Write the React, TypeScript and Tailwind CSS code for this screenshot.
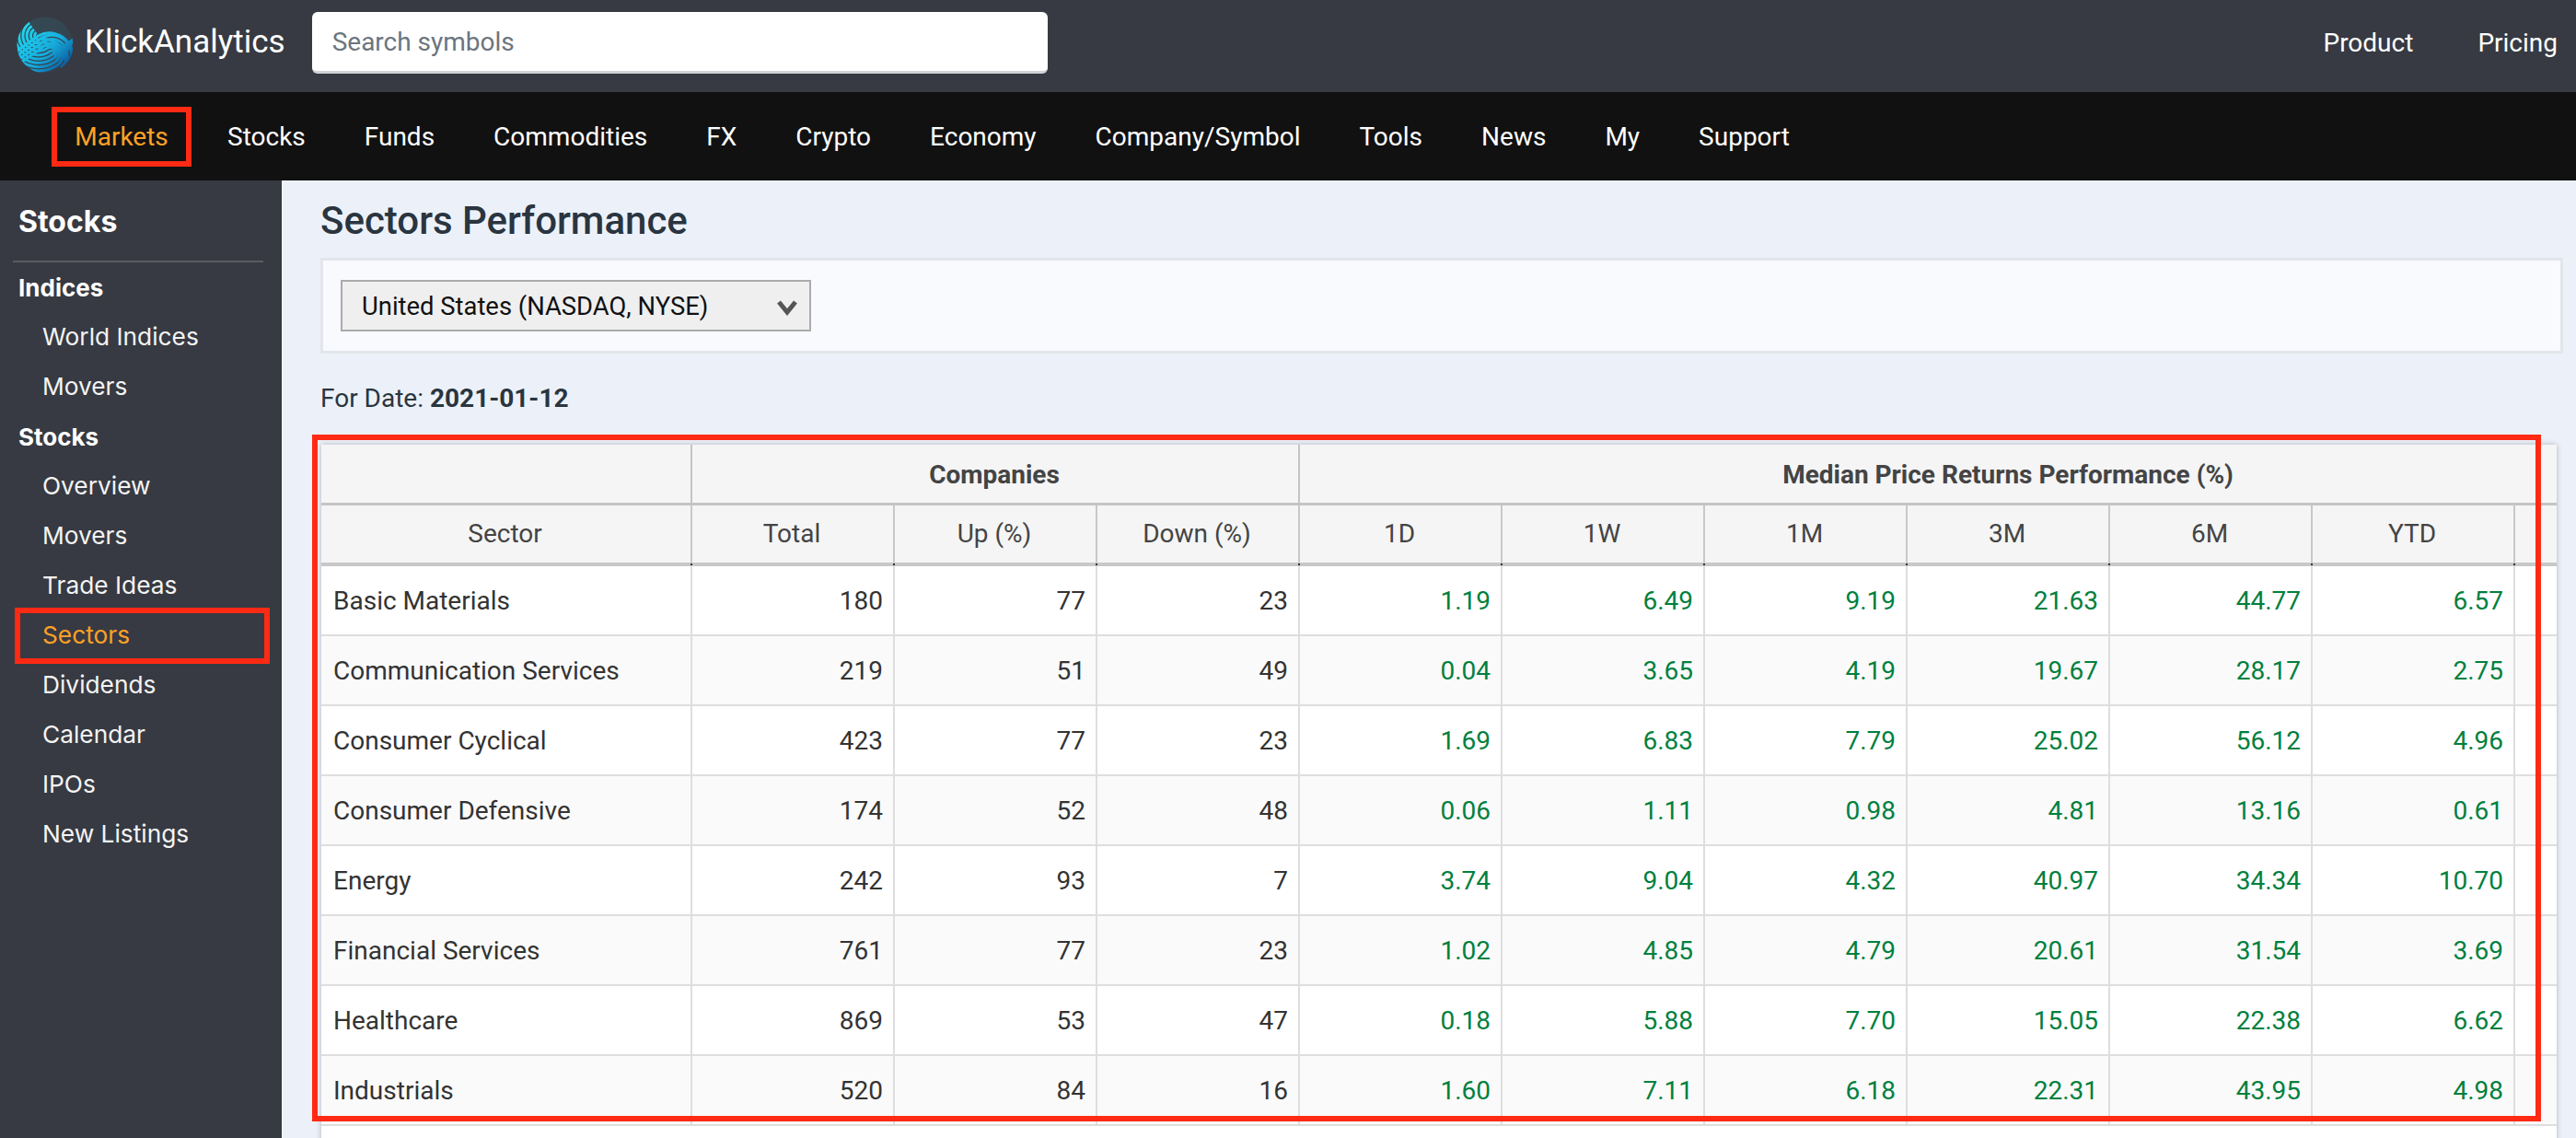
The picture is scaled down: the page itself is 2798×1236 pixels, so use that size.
const navItems = ['Stocks', 'Funds', 'Commodities', 'FX', 'Crypto', 'Economy', 'Company/Symbol', 'Tools', 'News', 'My', 'Support'];

const rows: (string | number)[][] = [
  ['Basic Materials', 180, 77, 23, '1.19', '6.49', '9.19', '21.63', '44.77', '6.57'],
  ['Communication Services', 219, 51, 49, '0.04', '3.65', '4.19', '19.67', '28.17', '2.75'],
  ['Consumer Cyclical', 423, 77, 23, '1.69', '6.83', '7.79', '25.02', '56.12', '4.96'],
  ['Consumer Defensive', 174, 52, 48, '0.06', '1.11', '0.98', '4.81', '13.16', '0.61'],
  ['Energy', 242, 93, 7, '3.74', '9.04', '4.32', '40.97', '34.34', '10.70'],
  ['Financial Services', 761, 77, 23, '1.02', '4.85', '4.79', '20.61', '31.54', '3.69'],
  ['Healthcare', 869, 53, 47, '0.18', '5.88', '7.70', '15.05', '22.38', '6.62'],
  ['Industrials', 520, 84, 16, '1.60', '7.11', '6.18', '22.31', '43.95', '4.98'],
];

const columns = ['Total', 'Up (%)', 'Down (%)', '1D', '1W', '1M', '3M', '6M', 'YTD'];

// Logo: parallel S curves tilted to the left, cut out of a blue gradient disc
function Logo() {
  const R = 13;
  const step = 4.4;
  const paths = [-6, -5, -4, -3, -2, -1, 0, 1, 2, 3, 4, 5, 6].map((k) => {
    const d = k * step;
    const r = R + d;
    const q = R - d;
    if (r <= 0) {
      const y = 19 - r;
      return `M -30 ${y} L 32 ${y} A ${q} ${q} 0 0 1 32 ${45 + q}`;
    }
    if (q <= 0) {
      const y = 45 + q;
      return `M 32 ${19 - r} A ${r} ${r} 0 0 0 32 ${19 + r} L 94 ${y}`;
    }
    return `M 32 ${19 - r} A ${r} ${r} 0 0 0 32 ${19 + r} A ${q} ${q} 0 0 1 32 ${45 + q}`;
  });
  return (
    <svg viewBox="0 0 64 64" className="h-[62px] w-[62px] shrink-0 mt-[6px]">
      <defs>
        <linearGradient id="logo-blue" x1="0.1" y1="0.1" x2="0.9" y2="0.9">
          <stop offset="0" stopColor="#22dcf2" />
          <stop offset="0.6" stopColor="#16aadc" />
          <stop offset="1" stopColor="#0b5296" />
        </linearGradient>
        <mask id="logo-stripes">
          <g fill="none" stroke="#fff" strokeWidth="3.1" transform="rotate(-35 32 32)">
            {paths.map((d) => (
              <path key={d} d={d} />
            ))}
          </g>
        </mask>
      </defs>
      <circle cx="32" cy="32" r="31.5" fill="url(#logo-blue)" opacity="0.1" />
      <circle cx="32" cy="32" r="31.5" fill="url(#logo-blue)" mask="url(#logo-stripes)" />
    </svg>
  );
}

function SideItem({ label, active }: { label: string; active?: boolean }) {
  return (
    <div
      className={`h-[54px] flex items-center pl-[46px] text-[26.3px] ${
        active ? 'text-[#ffa126]' : 'text-[#f4f4f4]'
      }`}
    >
      {label}
    </div>
  );
}

function SideLabel({ label }: { label: string }) {
  return <div className="h-[54px] flex items-center pl-[20px] text-[26px] font-bold text-white">{label}</div>;
}

// tiny dark tick where the header rule meets a column rule
function Tick() {
  return <span className="absolute -bottom-[3px] -right-[2px] h-[2px] w-[2px] bg-[#333]" />;
}

export default function App() {
  return (
    <div className="h-[1236px] w-[2798px] overflow-hidden flex flex-col bg-[#ecf1f9] font-['Roboto',sans-serif]">
      {/* TOP BAR */}
      <header className="h-[100px] shrink-0 bg-[#373a42] flex items-center pl-[18px] pr-[20px] pb-[8px]">
        <Logo />
        <span className="ml-[12px] text-[35px] text-white">KlickAnalytics</span>
        <input
          readOnly
          placeholder="Search symbols"
          className="ml-[29px] h-[67px] w-[799px] rounded-[6px] border-b-[3px] border-[#d0d3d8] bg-white px-[22px] pt-[2px] text-[28px] placeholder:text-[#6c757d] outline-none"
        />
        <div className="ml-auto flex items-center gap-[70px] pt-[2px] text-[28px] text-white">
          <span>Product</span>
          <span>Pricing</span>
        </div>
      </header>

      {/* MARKET NAV */}
      <nav className="h-[96px] shrink-0 bg-[#111111] flex items-center pl-[56px] gap-[64px] text-[28px] text-white">
        <span className="-mr-[25px] h-[65px] w-[152px] flex items-center justify-center border-[6px] border-[#ff2a14] pt-[1px] text-[#ffa126]">
          Markets
        </span>
        {navItems.map((item) => (
          <span key={item} className="pt-[1px]">
            {item}
          </span>
        ))}
      </nav>

      <div className="flex flex-1 min-h-0">
        {/* SIDEBAR */}
        <aside className="w-[306px] shrink-0 bg-[#373a42] font-['Inter',sans-serif]">
          <div className="h-[89px] mx-[14px] w-[272px] border-b-2 border-[#5a5c60] flex items-center pl-[6px] pt-[3px] text-[32px] font-bold text-white">
            Stocks
          </div>
          <SideLabel label="Indices" />
          <SideItem label="World Indices" />
          <SideItem label="Movers" />
          <SideLabel label="Stocks" />
          <SideItem label="Overview" />
          <SideItem label="Movers" />
          <SideItem label="Trade Ideas" />
          <div className="relative">
            <SideItem label="Sectors" active />
            <span className="absolute left-[16px] top-[-3px] h-[61px] w-[277px] border-[6px] border-[#ff2a14]" />
          </div>
          <SideItem label="Dividends" />
          <SideItem label="Calendar" />
          <SideItem label="IPOs" />
          <SideItem label="New Listings" />
        </aside>

        {/* CONTENT */}
        <main className="flex-1 min-w-0 pl-[42px] pr-[14px]">
          <h1 className="h-[84px] flex items-center pt-[3px] text-[42px] font-medium text-[#2a3540]">Sectors Performance</h1>

          <div className="h-[104px] border-[3px] border-[#e2e6eb] bg-[#f8fafe] flex items-center pl-[19px]">
            <div className="relative w-[511px]">
              <select className="h-[56px] w-full appearance-none rounded-none border-2 border-[#ababab] bg-[#efefef] pl-[21px] pt-[4px] text-[27.4px] text-[#111] outline-none">
                <option>United States (NASDAQ, NYSE)</option>
              </select>
              <svg viewBox="0 0 24 18" className="absolute right-[14px] top-[21px] h-[18px] w-[24px]">
                <path d="M3 3 L12 14 L21 3" fill="none" stroke="#555" strokeWidth="5" />
              </svg>
            </div>
          </div>

          <div className="mt-[34px] text-[28px] leading-[30px] text-[#2a3540]">
            For Date: <b className="font-bold">2021-01-12</b>
          </div>

          <div className="relative mt-[35px]">
            <div className="w-[2428px] overflow-hidden bg-white shadow-[0_0_6px_rgba(0,0,0,0.25)] ml-[1px]">
              <table className="table-fixed border-separate border-spacing-0 w-[2603px] text-[28px] text-[#333]">
                <colgroup>
                  <col className="w-[403px]" />
                  {columns.map((c) => (
                    <col key={c} className="w-[220px]" />
                  ))}
                  <col className="w-[220px]" />
                </colgroup>
                <thead className="bg-[#f5f5f5] text-[#444]">
                  <tr className="h-[66px]">
                    <th className="border-b-[3px] border-r-2 border-[#c4c4c4]" />
                    <th colSpan={3} className="border-b-[3px] border-r-2 border-[#c4c4c4] pt-[3px] pr-[2px] font-bold">
                      Companies
                    </th>
                    <th colSpan={7} className="border-b-[3px] border-[#c4c4c4] pt-[3px] pr-[2px] font-bold">
                      Median Price Returns Performance (%)
                    </th>
                  </tr>
                  <tr className="h-[66px]">
                    <th className="relative border-b-4 border-r-2 border-[#c8c8c8] pr-[2px] font-normal">
                      Sector
                      <Tick />
                    </th>
                    {columns.map((c) => (
                      <th key={c} className="relative border-b-4 border-r-2 border-[#c8c8c8] pr-[2px] font-normal">
                        {c}
                        <Tick />
                      </th>
                    ))}
                    <th className="border-b-4 border-[#c8c8c8]" />
                  </tr>
                </thead>
                <tbody>
                  {rows.map((row, i) => (
                    <tr key={row[0]} className={`h-[76px] ${i % 2 === 1 ? 'bg-[#fafafa]' : 'bg-white'}`}>
                      {row.map((cell, j) => (
                        <td
                          key={j}
                          className={`border-b-2 border-r-2 border-[#dedede] pt-[1px] ${
                            j === 0
                              ? 'pl-[13px] text-left'
                              : j < 4
                                ? 'pr-[11px] text-right'
                                : 'pr-[11px] text-right text-[#00803e]'
                          }`}
                        >
                          {cell}
                        </td>
                      ))}
                      <td className="border-b-2 border-[#dedede]" />
                    </tr>
                  ))}
                  <tr className="h-[76px] bg-white">
                    <td colSpan={11} />
                  </tr>
                </tbody>
              </table>
            </div>
            {/* red annotation around the table */}
            <span className="pointer-events-none absolute left-[-9px] top-[-11px] h-[746px] w-[2421px] border-[6px] border-[#ff2a14]" />
          </div>
        </main>
      </div>
    </div>
  );
}
